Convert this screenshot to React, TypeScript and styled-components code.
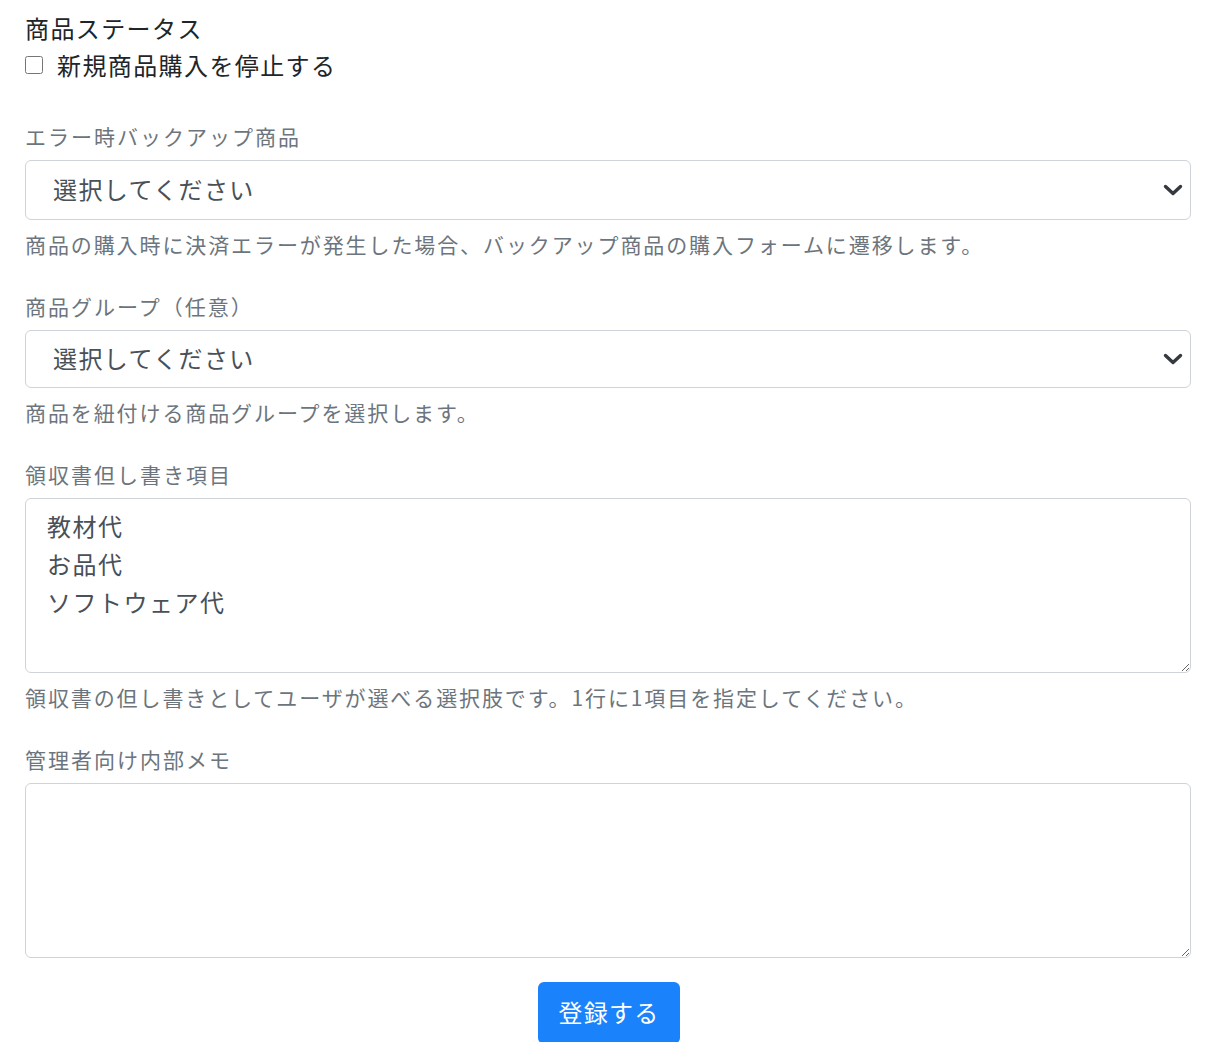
import React from 'react';
import styled, { createGlobalStyle } from 'styled-components';

const GlobalStyle = createGlobalStyle`
  html, body {
    margin: 0;
    padding: 0;
    background: #fff;
  }
  body {
    font-family: "Noto Sans CJK JP", "Noto Sans", sans-serif;
    color: #212529;
  }
`;

const Form = styled.form`
  display: flex;
  flex-direction: column;
  padding: 10px 29px 0 25px;
`;

const Title = styled.div`
  font-size: 24px;
  line-height: 36px;
  color: #212529;
  letter-spacing: 1.4px;
`;

const CheckRow = styled.label`
  display: flex;
  align-items: center;
  gap: 14px;
  font-size: 24px;
  line-height: 38px;
  color: #212529;
  letter-spacing: 1.4px;
`;

const Box = styled.input`
  width: 18px;
  height: 18px;
  margin: 0;
  accent-color: #007bff;
`;

const Group = styled.div<{ $first?: boolean }>`
  display: flex;
  flex-direction: column;
  margin-top: ${p => (p.$first ? '35px' : '28px')};
`;

const Label = styled.label`
  font-size: 21px;
  line-height: 34px;
  color: #6c757d;
  margin-bottom: 7px;
  letter-spacing: 2px;
`;

const SelectWrap = styled.div`
  position: relative;
`;

const Select = styled.select<{ $h: number }>`
  appearance: none;
  width: 100%;
  height: ${p => p.$h}px;
  padding: 0 60px 4px 27px;
  font-family: inherit;
  font-size: 24px;
  color: #495057;
  background: #fff;
  border: 1.5px solid #ced4da;
  border-radius: 6px;
  letter-spacing: 1.4px;
  outline: none;
`;

const Chevron = styled.svg`
  position: absolute;
  right: 8px;
  top: 50%;
  transform: translateY(-50%);
  width: 20px;
  height: 14px;
  pointer-events: none;
`;

const Area = styled.textarea`
  width: 100%;
  box-sizing: border-box;
  height: 175px;
  padding: 8px 21px;
  font-family: inherit;
  font-size: 24px;
  line-height: 38px;
  color: #495057;
  background: #fff;
  border: 1.5px solid #ced4da;
  border-radius: 6px;
  resize: vertical;
  outline: none;
  letter-spacing: 1.5px;
`;

const Help = styled.small`
  display: block;
  margin-top: 7px;
  font-size: 21px;
  line-height: 34px;
  color: #6c757d;
  letter-spacing: 1.9px;
`;

const Actions = styled.div`
  display: flex;
  justify-content: center;
  margin-top: 24px;
  padding-left: 2px;
`;

const Submit = styled.button`
  width: 142px;
  height: 62px;
  padding: 0 0 4px;
  border: none;
  border-radius: 6px;
  background: #1a82fb;
  color: #fff;
  font-family: inherit;
  font-size: 24px;
  letter-spacing: 1.2px;
  cursor: pointer;
`;

const Dropdown = ({ id, h }: { id: string; h: number }) => (
  <SelectWrap>
    <Select id={id} $h={h} defaultValue="">
      <option value="">選択してください</option>
    </Select>
    <Chevron viewBox="0 0 20 14">
      <path d="M2.5 3.5 L10 10.5 L17.5 3.5" fill="none" stroke="#343a40" strokeWidth="3.4" strokeLinecap="round" strokeLinejoin="round" />
    </Chevron>
  </SelectWrap>
);

export default function App() {
  return (
    <>
      <GlobalStyle />
      <Form onSubmit={e => e.preventDefault()}>
        <Title>商品ステータス</Title>
        <CheckRow>
          <Box type="checkbox" />
          新規商品購入を停止する
        </CheckRow>

        <Group $first>
          <Label htmlFor="backup">エラー時バックアップ商品</Label>
          <Dropdown id="backup" h={60} />
          <Help>商品の購入時に決済エラーが発生した場合、バックアップ商品の購入フォームに遷移します。</Help>
        </Group>

        <Group>
          <Label htmlFor="group">商品グループ（任意）</Label>
          <Dropdown id="group" h={58} />
          <Help>商品を紐付ける商品グループを選択します。</Help>
        </Group>

        <Group>
          <Label htmlFor="receipt">領収書但し書き項目</Label>
          <Area id="receipt" defaultValue={'教材代\nお品代\nソフトウェア代'} />
          <Help>領収書の但し書きとしてユーザが選べる選択肢です。1行に1項目を指定してください。</Help>
        </Group>

        <Group>
          <Label htmlFor="memo">管理者向け内部メモ</Label>
          <Area id="memo" />
        </Group>

        <Actions>
          <Submit type="submit">登録する</Submit>
        </Actions>
      </Form>
    </>
  );
}
